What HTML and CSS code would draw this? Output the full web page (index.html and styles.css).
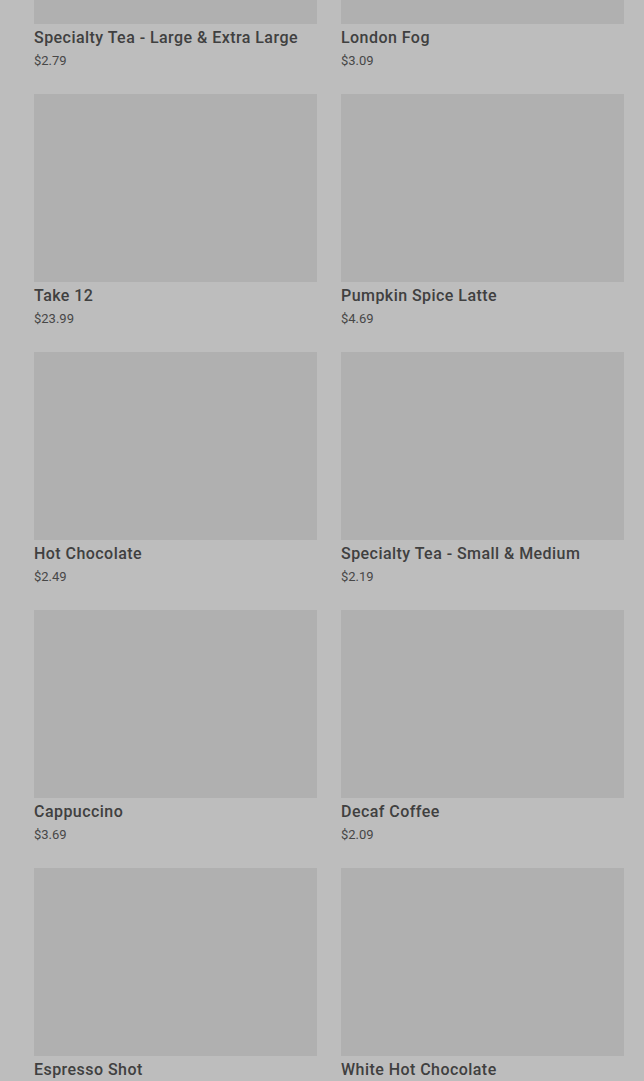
FILE: index.html
```html
<!DOCTYPE html>
<html>
<head>
<meta charset="utf-8">
<link rel="stylesheet" href="styles.css">
</head>
<body>
<main class="menu">
  <div class="grid">
    <div class="item"><div class="thumb"></div><div class="name">Specialty Tea - Large &amp; Extra Large</div><div class="price">$2.79</div></div>
    <div class="item"><div class="thumb"></div><div class="name">London Fog</div><div class="price">$3.09</div></div>
    <div class="item"><div class="thumb"></div><div class="name">Take 12</div><div class="price">$23.99</div></div>
    <div class="item"><div class="thumb"></div><div class="name">Pumpkin Spice Latte</div><div class="price">$4.69</div></div>
    <div class="item"><div class="thumb"></div><div class="name">Hot Chocolate</div><div class="price">$2.49</div></div>
    <div class="item"><div class="thumb"></div><div class="name">Specialty Tea - Small &amp; Medium</div><div class="price">$2.19</div></div>
    <div class="item"><div class="thumb"></div><div class="name">Cappuccino</div><div class="price">$3.69</div></div>
    <div class="item"><div class="thumb"></div><div class="name">Decaf Coffee</div><div class="price">$2.09</div></div>
    <div class="item"><div class="thumb"></div><div class="name">Espresso Shot</div><div class="price">$3.19</div></div>
    <div class="item"><div class="thumb"></div><div class="name">White Hot Chocolate</div><div class="price">$3.29</div></div>
  </div>
</main>
</body>
</html>
```
FILE: styles.css
```css
html, body {
  margin: 0;
  padding: 0;
  background: #bdbdbd;
  overflow: hidden;
  height: 1081px;
}
.menu {
  padding: 0 20px 0 34px;
  font-family: Roboto, "Liberation Sans", sans-serif;
}
.grid {
  margin-top: -164px;
  display: grid;
  grid-template-columns: 283px 283px;
  column-gap: 24px;
  row-gap: 0;
}
.item {
  height: 258px;
  display: flex;
  flex-direction: column;
}
.thumb {
  height: 188px;
  background: #b0b0b0;
  flex: none;
}
.name {
  margin-top: 2px;
  font-size: 16px;
  line-height: 24px;
  font-weight: 500;
  color: #404040;
  letter-spacing: 0.45px;
  white-space: nowrap;
}
.price {
  margin-top: 1px;
  font-size: 13px;
  line-height: 20px;
  color: #474747;
}
```
